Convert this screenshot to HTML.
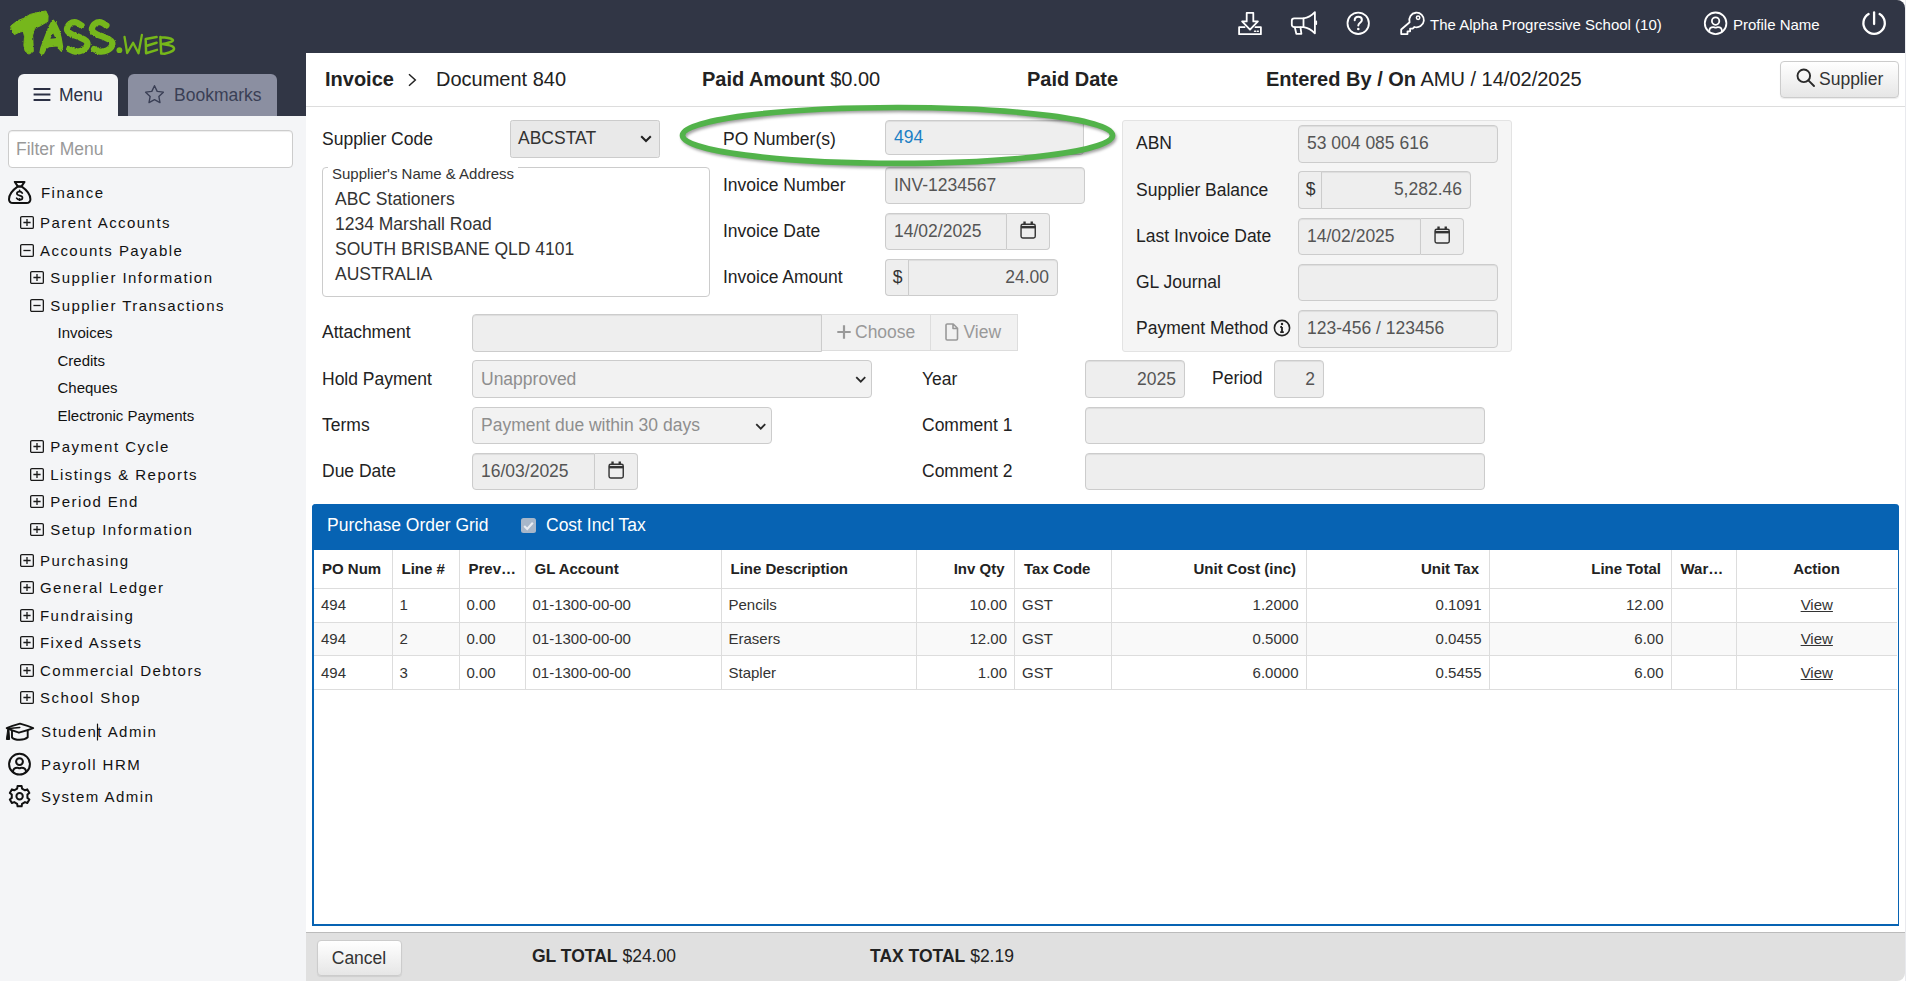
<!DOCTYPE html>
<html>
<head>
<meta charset="utf-8">
<title>TASS.web - Invoice</title>
<style>
*{box-sizing:border-box;margin:0;padding:0}
html,body{width:1906px;height:981px;overflow:hidden;background:#fff}
body{font-family:"Liberation Sans",sans-serif;font-size:17.5px;color:#222;position:relative}
.abs{position:absolute}
#hdr{position:absolute;left:0;top:0;width:1905px;height:53px;background:#313645;border-top-right-radius:8px}
#sidetop{position:absolute;left:0;top:53px;width:306px;height:63px;background:#313645}
#side{position:absolute;left:0;top:116px;width:306px;height:865px;background:#f4f5f7}
.tab{position:absolute;top:74px;height:42px;border-radius:6px 6px 0 0;font-size:17.5px;line-height:42px;white-space:nowrap}
#tabmenu{left:18px;width:100px;background:#f4f5f7;color:#2b3044}
#tabbm{left:128px;width:149px;background:#8b8fa1;color:#3a3f55}
#filter{position:absolute;left:8px;top:130px;width:285px;height:38px;border:1px solid #ccc;border-radius:4px;background:#fff;color:#999;font-size:17.5px;line-height:37px;padding-left:7px;box-shadow:inset 0 1px 1px rgba(0,0,0,.075)}
.mi{position:absolute;font-size:15px;letter-spacing:1.45px;color:#111;line-height:18px;white-space:nowrap}
.ms{position:absolute;font-size:15px;color:#111;line-height:18px;white-space:nowrap}
.bx{position:absolute;width:13.6px;height:12.6px;border:1.3px solid #222;border-radius:1.5px}
.bx:before{content:"";position:absolute;left:2px;right:2px;top:4.3px;height:1.4px;background:#222}
.bx.p:after{content:"";position:absolute;top:1.5px;bottom:1.5px;left:4.8px;width:1.4px;background:#222}
#titlebar{position:absolute;left:306px;top:53px;width:1599px;height:54px;background:#fff;border-bottom:1px solid #ddd}
.tt{position:absolute;top:67px;font-size:20px;line-height:24px;color:#222;white-space:nowrap}
.tt b{font-weight:bold}
.lbl{position:absolute;font-size:17.5px;line-height:20px;color:#222;white-space:nowrap}
.inp{position:absolute;height:37px;background:#eee;border:1px solid #ccc;border-radius:4px;box-shadow:inset 0 1px 1px rgba(0,0,0,.075);font-size:17.5px;color:#555;padding:0 8px;line-height:34px;white-space:nowrap;overflow:hidden}
.inp.r{text-align:right}
.addon{position:absolute;height:37px;background:#eee;border:1px solid #ccc;font-size:17.5px;color:#333;line-height:34px;text-align:center}
.cal{position:absolute;height:37px;background:#eee;border:1px solid #ccc;border-left:0;border-radius:0 4px 4px 0}
.sel{position:absolute;height:37px;background:#eee;border:1px solid #ccc;border-radius:4px;font-size:17.5px;line-height:34px;padding-left:8px;white-space:nowrap}
#well{position:absolute;left:1122px;top:120px;width:390px;height:232px;background:#f5f5f5;border:1px solid #e3e3e3;border-radius:3px}
#grid{position:absolute;left:312px;top:504px;width:1587px;height:422px;border:2px solid #0763b3;border-right-width:1px;border-top:0;border-radius:4px 4px 0 0;background:#fff}
#ghead{position:absolute;left:312px;top:504px;width:1587px;height:46px;background:#0763b3;border-radius:4px 4px 0 0;color:#fff}
table{border-collapse:collapse;position:absolute;left:314px;top:550px;width:1583px;table-layout:fixed;font-size:15px;color:#333}
th{height:38px;border-right:1px solid #ddd;border-bottom:1px solid #ddd;font-weight:bold;padding:0 9.5px 0 9px;text-align:left;color:#222;white-space:nowrap;overflow:hidden}
td{height:34px;border-right:1px solid #ddd;border-bottom:1px solid #ddd;padding:0 7px 2px 7px;white-space:nowrap}
tr.alt td{height:33px;padding-bottom:0}
tr.r3 td{padding-bottom:0}
th.r,td.r{text-align:right}
th.c,td.c{text-align:center}
tr.alt td{background:#f9f9f9}
th:last-child,td:last-child{border-right:0}
#foot{position:absolute;left:306px;top:932px;width:1599px;height:49px;background:#e0e0e0;border-top:1px solid #bbb;border-bottom-right-radius:8px}
.btn{position:absolute;border:1px solid #ccc;border-radius:4px;background:linear-gradient(#fff,#e6e6e6);font-size:17.5px;color:#333;text-align:center;white-space:nowrap;box-shadow:0 1px 1px rgba(0,0,0,.08)}
</style>
</head>
<body>
<div class="abs" style="left:1905px;top:0;width:1px;height:981px;background:#e9eaee"></div>
<div id="hdr"></div>
<div id="sidetop"></div>
<div id="side"></div>
<svg class="abs" style="left:0;top:0" width="190" height="64" viewBox="0 0 190 64" fill="none" stroke="#76b71a" stroke-linecap="round" stroke-linejoin="round">
<defs><filter id="rg" x="-5%" y="-5%" width="110%" height="110%"><feTurbulence type="fractalNoise" baseFrequency="0.8" numOctaves="2" seed="3" result="n"/><feDisplacementMap in="SourceGraphic" in2="n" scale="2.4" xChannelSelector="R" yChannelSelector="G"/></filter></defs>
<g filter="url(#rg)">
<path d="M11.0 25.8 L17.6 20.7 L23.9 18.2 L30.2 14.4 L40.3 11.9 L45.9 11.0 L48.1 15.7 L47.8 21.4 L40.3 25.8 L34.6 28.3 L32.7 35.2 L33.0 42.8 L33.3 51.6 L28.9 54.1 L25.1 51.0 L23.9 45.3 L24.5 36.5 L23.3 31.4 L19.5 32.1 L14.4 34.6 L11.3 29.6Z" fill="#76b71a" stroke-width="1"/>
<path d="M53.5 19.5 L56.6 23.3 L59.8 30.2 L61.7 37.7 L63.2 46.6 L62.6 50.3 L60.7 51.6 L58.5 49.1 L57.3 46.6 L49.1 47.2 L46.6 49.1 L44.0 54.1 L41.5 55.1 L39.3 52.8 L40.3 47.8 L44.0 37.7 L48.4 26.4 L51.6 20.7ZM52.8 32.8 L55.5 38.3 L50.4 38.8Z" fill="#76b71a" fill-rule="evenodd" stroke="none"/>
<path d="M81.5 25.5 C80.6 25.0 78.0 22.6 76.1 22.3 C74.1 22.0 71.3 22.7 69.8 23.9 C68.3 25.1 66.8 27.9 67.0 29.6 C67.2 31.3 69.0 32.8 71.1 34.0 C73.1 35.2 76.8 36.0 79.3 37.1 C81.8 38.2 84.9 39.5 86.2 40.9 C87.5 42.3 87.8 43.7 87.2 45.3 C86.6 46.9 84.5 49.2 82.4 50.3 C80.4 51.3 77.1 51.8 74.9 51.6 C72.7 51.4 70.2 49.5 69.2 49.1" stroke-width="6.300"/>
<path d="M106.4 25.5 C105.5 25.0 103.0 22.6 101.0 22.3 C99.0 22.0 96.2 22.7 94.7 23.9 C93.2 25.1 91.7 27.9 91.9 29.6 C92.1 31.3 94.0 32.8 96.0 34.0 C98.0 35.2 101.7 36.0 104.2 37.1 C106.7 38.2 109.8 39.5 111.1 40.9 C112.4 42.3 112.7 43.7 112.1 45.3 C111.5 46.9 109.4 49.2 107.3 50.3 C105.3 51.3 102.0 51.8 99.8 51.6 C97.6 51.4 95.0 49.5 94.1 49.1" stroke-width="6.300"/>
</g>
<circle cx="119.400" cy="50.200" r="2.900" fill="#76b71a" stroke="none"/>
<!-- WEB -->
<path d="M124.500 36.800L127.200 53L133.100 42.800L138.500 53.300L141.900 34.900" stroke-width="2.300"/>
<path d="M156.600 37.100L145.700 39L146.100 53.200L157 49.900M146.100 46L156.600 42.700" stroke-width="2.500"/>
<path d="M160.400 37L161.200 53.500M160.400 37.200C165 37.300 171 38.300 172.600 39.600C174 41 172 42 162.500 44C168 44.800 172.500 46 173.500 47.200C175.500 50 172 52 164.600 53.800L161.200 53.500" stroke-width="2.500"/>
</svg>
<div class="tab" id="tabmenu"><svg class="abs" style="left:14.500px;top:13px" width="18" height="15" viewBox="0 0 18 15"><path d="M.6 2h16.800M.6 7.500h16.800M.6 13h16.800" stroke="#2b3044" stroke-width="1.900" fill="none"/></svg><span class="abs" style="left:41px;top:0">Menu</span></div>
<div class="tab" id="tabbm"><svg class="abs" style="left:16px;top:10px" width="21" height="21" viewBox="0 0 16 16"><path d="M8 1.3l2.05 4.3 4.7.62-3.43 3.27.85 4.67L8 11.9l-4.17 2.26.85-4.67L1.25 6.22l4.7-.62z" stroke="#3a3f55" stroke-width="1.05" fill="none" stroke-linejoin="round"/></svg><span class="abs" style="left:46px;top:0">Bookmarks</span></div>
<div id="filter">Filter Menu</div>
<div class="mi" style="left:41px;top:184px">Finance</div>
<svg class="abs" style="left:19.8px;top:216.1px" width="14" height="13" viewBox="0 0 14 13" fill="none" stroke="#1a1a1a" stroke-width="1.300"><rect x=".65" y=".65" width="12.700" height="11.700" rx="1.200"/><path d="M3.400 6.500h7.200M7 3.100v6.800"/></svg>
<div class="mi" style="left:40px;top:214px">Parent Accounts</div>
<svg class="abs" style="left:19.8px;top:244.1px" width="14" height="13" viewBox="0 0 14 13" fill="none" stroke="#1a1a1a" stroke-width="1.300"><rect x=".65" y=".65" width="12.700" height="11.700" rx="1.200"/><path d="M3.400 6.500h7.200"/></svg>
<div class="mi" style="left:40px;top:242px">Accounts Payable</div>
<svg class="abs" style="left:29.8px;top:271.1px" width="14" height="13" viewBox="0 0 14 13" fill="none" stroke="#1a1a1a" stroke-width="1.300"><rect x=".65" y=".65" width="12.700" height="11.700" rx="1.200"/><path d="M3.400 6.500h7.200M7 3.100v6.800"/></svg>
<div class="mi" style="left:50.200px;top:269px">Supplier Information</div>
<svg class="abs" style="left:29.8px;top:299.1px" width="14" height="13" viewBox="0 0 14 13" fill="none" stroke="#1a1a1a" stroke-width="1.300"><rect x=".65" y=".65" width="12.700" height="11.700" rx="1.200"/><path d="M3.400 6.500h7.200"/></svg>
<div class="mi" style="left:50.200px;top:297px">Supplier Transactions</div>
<div class="ms" style="left:57.500px;top:324px">Invoices</div>
<div class="ms" style="left:57.500px;top:352px">Credits</div>
<div class="ms" style="left:57.500px;top:379px">Cheques</div>
<div class="ms" style="left:57.500px;top:407px">Electronic Payments</div>
<svg class="abs" style="left:29.8px;top:440.1px" width="14" height="13" viewBox="0 0 14 13" fill="none" stroke="#1a1a1a" stroke-width="1.300"><rect x=".65" y=".65" width="12.700" height="11.700" rx="1.200"/><path d="M3.400 6.500h7.200M7 3.100v6.800"/></svg>
<div class="mi" style="left:50.200px;top:438px">Payment Cycle</div>
<svg class="abs" style="left:29.8px;top:468.1px" width="14" height="13" viewBox="0 0 14 13" fill="none" stroke="#1a1a1a" stroke-width="1.300"><rect x=".65" y=".65" width="12.700" height="11.700" rx="1.200"/><path d="M3.400 6.500h7.200M7 3.100v6.800"/></svg>
<div class="mi" style="left:50.200px;top:466px">Listings &amp; Reports</div>
<svg class="abs" style="left:29.8px;top:495.1px" width="14" height="13" viewBox="0 0 14 13" fill="none" stroke="#1a1a1a" stroke-width="1.300"><rect x=".65" y=".65" width="12.700" height="11.700" rx="1.200"/><path d="M3.400 6.500h7.200M7 3.100v6.800"/></svg>
<div class="mi" style="left:50.200px;top:493px">Period End</div>
<svg class="abs" style="left:29.8px;top:523.1px" width="14" height="13" viewBox="0 0 14 13" fill="none" stroke="#1a1a1a" stroke-width="1.300"><rect x=".65" y=".65" width="12.700" height="11.700" rx="1.200"/><path d="M3.400 6.500h7.200M7 3.100v6.800"/></svg>
<div class="mi" style="left:50.200px;top:521px">Setup Information</div>
<svg class="abs" style="left:19.8px;top:554.1px" width="14" height="13" viewBox="0 0 14 13" fill="none" stroke="#1a1a1a" stroke-width="1.300"><rect x=".65" y=".65" width="12.700" height="11.700" rx="1.200"/><path d="M3.400 6.500h7.200M7 3.100v6.800"/></svg>
<div class="mi" style="left:40px;top:552px">Purchasing</div>
<svg class="abs" style="left:19.8px;top:581.1px" width="14" height="13" viewBox="0 0 14 13" fill="none" stroke="#1a1a1a" stroke-width="1.300"><rect x=".65" y=".65" width="12.700" height="11.700" rx="1.200"/><path d="M3.400 6.500h7.200M7 3.100v6.800"/></svg>
<div class="mi" style="left:40px;top:579px">General Ledger</div>
<svg class="abs" style="left:19.8px;top:609.1px" width="14" height="13" viewBox="0 0 14 13" fill="none" stroke="#1a1a1a" stroke-width="1.300"><rect x=".65" y=".65" width="12.700" height="11.700" rx="1.200"/><path d="M3.400 6.500h7.200M7 3.100v6.800"/></svg>
<div class="mi" style="left:40px;top:607px">Fundraising</div>
<svg class="abs" style="left:19.8px;top:636.1px" width="14" height="13" viewBox="0 0 14 13" fill="none" stroke="#1a1a1a" stroke-width="1.300"><rect x=".65" y=".65" width="12.700" height="11.700" rx="1.200"/><path d="M3.400 6.500h7.200M7 3.100v6.800"/></svg>
<div class="mi" style="left:40px;top:634px">Fixed Assets</div>
<svg class="abs" style="left:19.8px;top:664.1px" width="14" height="13" viewBox="0 0 14 13" fill="none" stroke="#1a1a1a" stroke-width="1.300"><rect x=".65" y=".65" width="12.700" height="11.700" rx="1.200"/><path d="M3.400 6.500h7.200M7 3.100v6.800"/></svg>
<div class="mi" style="left:40px;top:662px">Commercial Debtors</div>
<svg class="abs" style="left:19.8px;top:691.1px" width="14" height="13" viewBox="0 0 14 13" fill="none" stroke="#1a1a1a" stroke-width="1.300"><rect x=".65" y=".65" width="12.700" height="11.700" rx="1.200"/><path d="M3.400 6.500h7.200M7 3.100v6.800"/></svg>
<div class="mi" style="left:40px;top:689px">School Shop</div>
<div class="mi" style="left:41px;top:723px">Student Admin</div>
<div class="mi" style="left:41px;top:756px">Payroll HRM</div>
<div class="mi" style="left:41px;top:788px">System Admin</div>
<svg class="abs" style="left:0;top:0" width="1906" height="53" viewBox="0 0 1906 53" fill="none" stroke="#fff" stroke-width="1.800" stroke-linejoin="round" stroke-linecap="round">
<!-- download -->
<path d="M1246.700 12.800h6.600v8.600h4.600l-7.900 8.300-7.900-8.300h4.600z"/>
<path d="M1244.500 27.200h-5.400v7h21.800v-7h-5.400"/>
<path d="M1254.600 31.300h.9M1257.400 31.300h.9" stroke-width="1.600"/>
<!-- megaphone -->
<path d="M1303.500 18.300h-9.300a2.400 2.400 0 0 0-2.400 2.400v4a2.400 2.400 0 0 0 2.400 2.400h9.300z"/>
<path d="M1303.500 18.300c4.500-.6 8.200-2.800 11.400-6.200v21.200c-3.200-3.400-6.900-5.600-11.400-6.200"/>
<path d="M1294.800 27.300l1.500 6.500h5.100l-.9-6.500M1316.200 21.300v2.800"/>
<!-- help -->
<circle cx="1358.200" cy="23.300" r="10.700"/>
<path d="M1354.700 20.300c0-2.200 1.500-3.500 3.600-3.500 2.100 0 3.600 1.300 3.600 3.100 0 2.800-3.600 2.900-3.600 5.600" stroke-width="2"/>
<circle cx="1358.300" cy="29" r="1.300" fill="#fff" stroke="none"/>
<!-- key -->
<path d="M1409.600 22.200a7.300 7.300 0 1 1 4.800 4.800l-1.700 1.700h-2.600v2.600h-2.600v2.800h-6.300v-4.600z"/>
<circle cx="1418.100" cy="17.700" r="1.700" stroke-width="1.500"/>
<!-- user -->
<circle cx="1715.600" cy="23.300" r="10.800"/>
<circle cx="1715.600" cy="21.100" r="3.700"/>
<path d="M1709.200 31.500c0-2.800 1.800-4.300 4-4.300 1 0 1.400.4 2.400.4s1.400-.4 2.400-.4c2.200 0 4 1.500 4 4.300"/>
<!-- power -->
<path d="M1868.600 14a10.700 10.700 0 1 0 11 0" stroke-width="2.300"/>
<path d="M1874.100 12.500v11.600" stroke-width="2.300"/>
</svg>
<div class="abs" style="left:1430px;top:16px;font-size:15px;line-height:18px;color:#fff;white-space:nowrap">The Alpha Progressive School (10)</div>
<div class="abs" style="left:1733px;top:16px;font-size:15px;line-height:18px;color:#fff;white-space:nowrap">Profile Name</div>
<svg class="abs" style="left:0;top:170px" width="120" height="650" viewBox="0 170 120 650" fill="none" stroke="#111" stroke-width="2" stroke-linejoin="round" stroke-linecap="round">
<!-- money bag -->
<path d="M14.800 181.900h9.700l-3 4.500h-3.700z"/>
<path d="M17.600 186.600C12 190.500 9 195 9 199.200c0 2.600 1.700 3.800 4 3.800h13.400c2.300 0 4-1.200 4-3.800 0-4.200-3-8.700-8.600-12.600z"/>
<path d="M22.300 193.100c-.5-1-1.500-1.500-2.700-1.500-1.600 0-2.700.8-2.700 2 0 2.800 5.600 1.200 5.600 4.100 0 1.300-1.200 2.100-2.900 2.100-1.300 0-2.400-.5-3-1.600M19.600 190.300v1.300M19.600 198.800v1.400" stroke-width="1.700"/>
<!-- grad cap -->
<path d="M20 723.700c-4.500 1.200-9.500 2.800-13.300 4.500 3.800 1.800 8.300 3.300 12.200 4.500 4.800-1.200 10-2.700 14.300-4.500-4-1.700-8.700-3.300-13.200-4.500z" stroke-width="1.900"/>
<path d="M8.500 728.600l11.300-1.200" stroke-width="1.500"/>
<path d="M7.700 729.500l-1.300 10h3.200l-.7-10z" fill="#111" stroke-width="1"/>
<path d="M12 731v6.500c1.500 1.500 4.500 2.300 7.700 2.300s6.300-.9 8-2.500v-6.500" stroke-width="1.900"/>
<!-- user -->
<circle cx="19.500" cy="764.200" r="10.400"/>
<circle cx="19.500" cy="761.600" r="3.400"/>
<path d="M12.900 771.800c.3-2.800 2.400-4 4.400-4 .9 0 1.300.4 2.200.4s1.300-.4 2.200-.4c2 0 4.100 1.200 4.400 4"/>
<!-- gear -->
<path d="M17.16 788.58 L17.55 786.11 L21.65 786.11 L22.04 788.58 L24.98 790.28 L27.32 789.38 L29.37 792.92 L27.42 794.50 L27.42 797.90 L29.37 799.48 L27.32 803.02 L24.98 802.12 L22.04 803.82 L21.65 806.29 L17.55 806.29 L17.16 803.82 L14.22 802.12 L11.88 803.02 L9.83 799.48 L11.78 797.90 L11.78 794.50 L9.83 792.92 L11.88 789.38 L14.22 790.28Z" stroke-width="2"/>
<circle cx="19.600" cy="796.200" r="3.200"/>
<!-- caret -->
<path d="M97.500 724v16" stroke-width="1.200" stroke="#111"/>
</svg>
<div id="titlebar"></div>
<div class="tt" style="left:325px"><b>Invoice</b></div>
<svg class="abs" style="left:406.500px;top:72px" width="10" height="16" viewBox="0 0 10 16" fill="none" stroke="#222" stroke-width="1.500"><path d="M2 2.300l6.300 5.700-6.300 5.700"/></svg>
<div class="tt" style="left:436px">Document 840</div>
<div class="tt" style="left:702px"><b>Paid Amount</b> $0.00</div>
<div class="tt" style="left:1027px"><b>Paid Date</b></div>
<div class="tt" style="left:1266px"><b>Entered By / On</b> AMU / 14/02/2025</div>
<div class="btn" style="left:1780px;top:61px;width:119px;height:37px;line-height:35px"><svg class="abs" style="left:14.500px;top:6.300px" width="19" height="19" viewBox="0 0 19 19" fill="none" stroke="#2a2a2a" stroke-width="1.900"><circle cx="7.800" cy="7.800" r="6.300"/><path d="M12.400 12.400l5.600 5.600" stroke-linecap="round"/></svg><span class="abs" style="left:38px;top:0">Supplier</span></div>

<div class="lbl" style="left:322px;top:129px">Supplier Code</div>
<div class="sel" style="left:510px;top:120px;width:150px;height:38px;color:#333;padding-left:7px;line-height:34px;background:#e9e9e9;border-radius:2.500px">ABCSTAT<svg class="abs" style="right:7px;top:14px" width="12" height="8" viewBox="0 0 12 8" fill="none" stroke="#222" stroke-width="2"><path d="M1.200 1.200L6 6l4.800-4.800"/></svg></div>
<div class="abs" style="left:322px;top:167px;width:388px;height:130px;border:1px solid #ccc;border-radius:4px"></div>
<div class="abs" style="left:328px;top:165px;background:#fff;padding:0 4px;font-size:15px;line-height:18px;color:#333;white-space:nowrap">Supplier's Name &amp; Address</div>
<div class="abs" style="left:335px;top:187px;font-size:17.5px;line-height:25px;color:#333;white-space:nowrap">ABC Stationers<br>1234 Marshall Road<br>SOUTH BRISBANE QLD 4101<br>AUSTRALIA</div>
<div class="lbl" style="left:723px;top:129px">PO Number(s)</div>
<div class="inp" style="left:885px;top:120px;width:199px;height:35px;color:#1b7fc4;line-height:33px">494</div>
<div class="lbl" style="left:723px;top:175px">Invoice Number</div>
<div class="inp" style="left:885px;top:167px;width:200px">INV-1234567</div>
<div class="lbl" style="left:723px;top:221px">Invoice Date</div>
<div class="inp" style="left:885px;top:213px;width:122px;border-radius:4px 0 0 4px">14/02/2025</div>
<div class="cal" style="left:1007px;top:213px;width:43px"><svg class="abs" style="left:13px;top:6.800px" width="16.300" height="18" viewBox="0 0 17 19" fill="none" stroke="#333" stroke-width="1.5"><rect x="1" y="3.500" width="15" height="14.500" rx="1.800"/><path d="M1 6.500h15" stroke-width="2.600"/><path d="M4.700 .6v3.200M12.300 .6v3.200" stroke-width="2.500"/></svg></div>
<div class="lbl" style="left:723px;top:267px">Invoice Amount</div>
<div class="addon" style="left:885px;top:259px;width:24px;border-right:0;border-radius:4px 0 0 4px">$</div>
<div class="inp r" style="left:908px;top:259px;width:150px;border-radius:0 4px 4px 0">24.00</div>
<div id="well"></div>
<div class="lbl" style="left:1136px;top:133px">ABN</div>
<div class="inp" style="left:1298px;top:125px;width:200px;height:38px;line-height:35px">53 004 085 616</div>
<div class="lbl" style="left:1136px;top:180px">Supplier Balance</div>
<div class="addon" style="left:1298px;top:171px;width:24px;border-right:0;border-radius:4px 0 0 4px;height:38px;line-height:35px">$</div>
<div class="inp r" style="left:1321px;top:171px;width:150px;border-radius:0 4px 4px 0;height:38px;line-height:35px">5,282.46</div>
<div class="lbl" style="left:1136px;top:226px">Last Invoice Date</div>
<div class="inp" style="left:1298px;top:218px;width:123px;border-radius:4px 0 0 4px">14/02/2025</div>
<div class="cal" style="left:1421px;top:218px;width:43px"><svg class="abs" style="left:13px;top:6.800px" width="16.300" height="18" viewBox="0 0 17 19" fill="none" stroke="#333" stroke-width="1.5"><rect x="1" y="3.500" width="15" height="14.500" rx="1.800"/><path d="M1 6.500h15" stroke-width="2.600"/><path d="M4.700 .6v3.200M12.300 .6v3.200" stroke-width="2.500"/></svg></div>
<div class="lbl" style="left:1136px;top:272px">GL Journal</div>
<div class="inp" style="left:1298px;top:264px;width:200px;height:37px"></div>
<div class="lbl" style="left:1136px;top:318px">Payment Method</div>
<svg class="abs" style="left:1273px;top:319px" width="18" height="18" viewBox="0 0 18 18" fill="none" stroke="#222" stroke-width="1.600"><circle cx="9" cy="9" r="7.600"/><path d="M9 8v5.200M7.300 8h1.700M7.200 13.200h3.600" stroke-width="1.800"/><circle cx="9" cy="5" r="1.200" fill="#222" stroke="none"/></svg>
<div class="inp" style="left:1298px;top:310px;width:200px;height:38px;line-height:35px">123-456 / 123456</div>

<div class="lbl" style="left:322px;top:322px">Attachment</div>
<div class="inp" style="left:472px;top:314px;width:350px;height:38px;border-radius:4px 0 0 4px"></div>
<div class="abs" style="left:822px;top:314px;width:109px;height:37px;background:#f1f1f1;border:1px solid #ddd;border-left:0;color:#999;font-size:17.5px;line-height:35px;white-space:nowrap"><svg class="abs" style="left:14.500px;top:10px" width="14" height="14" viewBox="0 0 14 14" stroke="#999" stroke-width="2.200" fill="none"><path d="M7 .3v13.400M.3 7h13.400"/></svg><span class="abs" style="left:33px;top:0">Choose</span></div>
<div class="abs" style="left:931px;top:314px;width:87px;height:37px;background:#f1f1f1;border:1px solid #ddd;border-left:0;color:#999;font-size:17.5px;line-height:35px;white-space:nowrap"><svg class="abs" style="left:14px;top:7.500px" width="13.500" height="18" viewBox="0 0 13.500 18" stroke="#999" stroke-width="1.600" fill="none" stroke-linejoin="round"><path d="M1 2.200a1.200 1.200 0 0 1 1.200-1.200h6l4.300 4.300v10.500a1.200 1.200 0 0 1-1.200 1.200H2.200a1.200 1.200 0 0 1-1.200-1.200zM8 1.200v4.300h4.300"/></svg><span class="abs" style="left:32.500px;top:0">View</span></div>
<div class="lbl" style="left:322px;top:369px">Hold Payment</div>
<div class="sel" style="left:472px;top:360px;width:400px;height:38px;line-height:36px;color:#8e8e8e;background:#f2f2f2">Unapproved<svg class="abs" style="right:5px;top:14.500px" width="11.500" height="7.500" viewBox="0 0 12 8" fill="none" stroke="#2a2a2a" stroke-width="1.900"><path d="M1.200 1.200L6 6l4.800-4.800"/></svg></div>
<div class="lbl" style="left:322px;top:415px">Terms</div>
<div class="sel" style="left:472px;top:407px;width:300px;color:#8e8e8e;background:#f2f2f2">Payment due within 30 days<svg class="abs" style="right:5px;top:14.500px" width="11.500" height="7.500" viewBox="0 0 12 8" fill="none" stroke="#2a2a2a" stroke-width="1.900"><path d="M1.200 1.200L6 6l4.800-4.800"/></svg></div>
<div class="lbl" style="left:322px;top:461px">Due Date</div>
<div class="inp" style="left:472px;top:453px;width:123px;border-radius:4px 0 0 4px">16/03/2025</div>
<div class="cal" style="left:595px;top:453px;width:43px"><svg class="abs" style="left:13px;top:6.800px" width="16.300" height="18" viewBox="0 0 17 19" fill="none" stroke="#333" stroke-width="1.5"><rect x="1" y="3.500" width="15" height="14.500" rx="1.800"/><path d="M1 6.500h15" stroke-width="2.600"/><path d="M4.700 .6v3.200M12.300 .6v3.200" stroke-width="2.500"/></svg></div>
<div class="lbl" style="left:922px;top:369px">Year</div>
<div class="inp r" style="left:1085px;top:360px;width:100px;height:38px;line-height:36px">2025</div>
<div class="lbl" style="left:1212px;top:368px">Period</div>
<div class="inp r" style="left:1274px;top:360px;width:50px;height:38px;line-height:36px">2</div>
<div class="lbl" style="left:922px;top:415px">Comment 1</div>
<div class="inp" style="left:1085px;top:407px;width:400px;height:37px"></div>
<div class="lbl" style="left:922px;top:461px">Comment 2</div>
<div class="inp" style="left:1085px;top:453px;width:400px;height:37px"></div>
<svg class="abs" style="left:670px;top:96.700px;overflow:visible" width="460" height="76" viewBox="0 0 460 76" fill="none"><defs><filter id="es" x="-5%" y="-20%" width="110%" height="150%"><feGaussianBlur stdDeviation="1.500"/></filter></defs><ellipse cx="229" cy="40.700" rx="215" ry="27.900" stroke="rgba(0,0,0,.38)" stroke-width="5" filter="url(#es)"/><ellipse cx="227.500" cy="38.400" rx="215" ry="27.900" stroke="#52b34a" stroke-width="5.700"/></svg>

<div id="grid"></div>
<div id="ghead"><span class="abs" style="left:15px;top:11px;font-size:17.5px;line-height:20px;white-space:nowrap">Purchase Order Grid</span>
<span class="abs" style="left:209px;top:14px;width:15px;height:15px;border-radius:2.500px;background:#a7b7ca"><svg class="abs" style="left:2px;top:2.500px" width="11" height="10" viewBox="0 0 11 10" fill="none" stroke="#e8edf3" stroke-width="2.100"><path d="M1.200 5l3 3L9.800 1.800"/></svg></span>
<span class="abs" style="left:234px;top:11px;font-size:17.5px;line-height:20px;white-space:nowrap">Cost Incl Tax</span></div>
<table><colgroup><col style="width:78px"><col style="width:67px"><col style="width:66px"><col style="width:196px"><col style="width:195px"><col style="width:98.5px"><col style="width:96.5px"><col style="width:195px"><col style="width:183px"><col style="width:182px"><col style="width:65px"><col style="width:161px"></colgroup><tr><th class="" style="padding-left:8px">PO Num</th><th class="">Line #</th><th class="">Prev…</th><th class="">GL Account</th><th class="">Line Description</th><th class="r">Inv Qty</th><th class="">Tax Code</th><th class="r">Unit Cost (inc)</th><th class="r">Unit Tax</th><th class="r">Line Total</th><th class="">War…</th><th class="c">Action</th></tr><tr class=""><td class="">494</td><td class="">1</td><td class="">0.00</td><td class="">01-1300-00-00</td><td class="">Pencils</td><td class="r">10.00</td><td class="">GST</td><td class="r">1.2000</td><td class="r">0.1091</td><td class="r">12.00</td><td></td><td class="c"><u>View</u></td></tr><tr class="alt"><td class="">494</td><td class="">2</td><td class="">0.00</td><td class="">01-1300-00-00</td><td class="">Erasers</td><td class="r">12.00</td><td class="">GST</td><td class="r">0.5000</td><td class="r">0.0455</td><td class="r">6.00</td><td></td><td class="c"><u>View</u></td></tr><tr class="r3"><td class="">494</td><td class="">3</td><td class="">0.00</td><td class="">01-1300-00-00</td><td class="">Stapler</td><td class="r">1.00</td><td class="">GST</td><td class="r">6.0000</td><td class="r">0.5455</td><td class="r">6.00</td><td></td><td class="c"><u>View</u></td></tr></table>
<div id="foot"></div>
<div class="btn" style="left:316.500px;top:939.500px;width:85px;height:36px;line-height:34px">Cancel</div>
<div class="abs" style="left:532px;top:946px;font-size:17.5px;line-height:20px;color:#222;white-space:nowrap"><b>GL TOTAL</b> $24.00</div>
<div class="abs" style="left:870px;top:946px;font-size:17.5px;line-height:20px;color:#222;white-space:nowrap"><b>TAX TOTAL</b> $2.19</div>
</body>
</html>
